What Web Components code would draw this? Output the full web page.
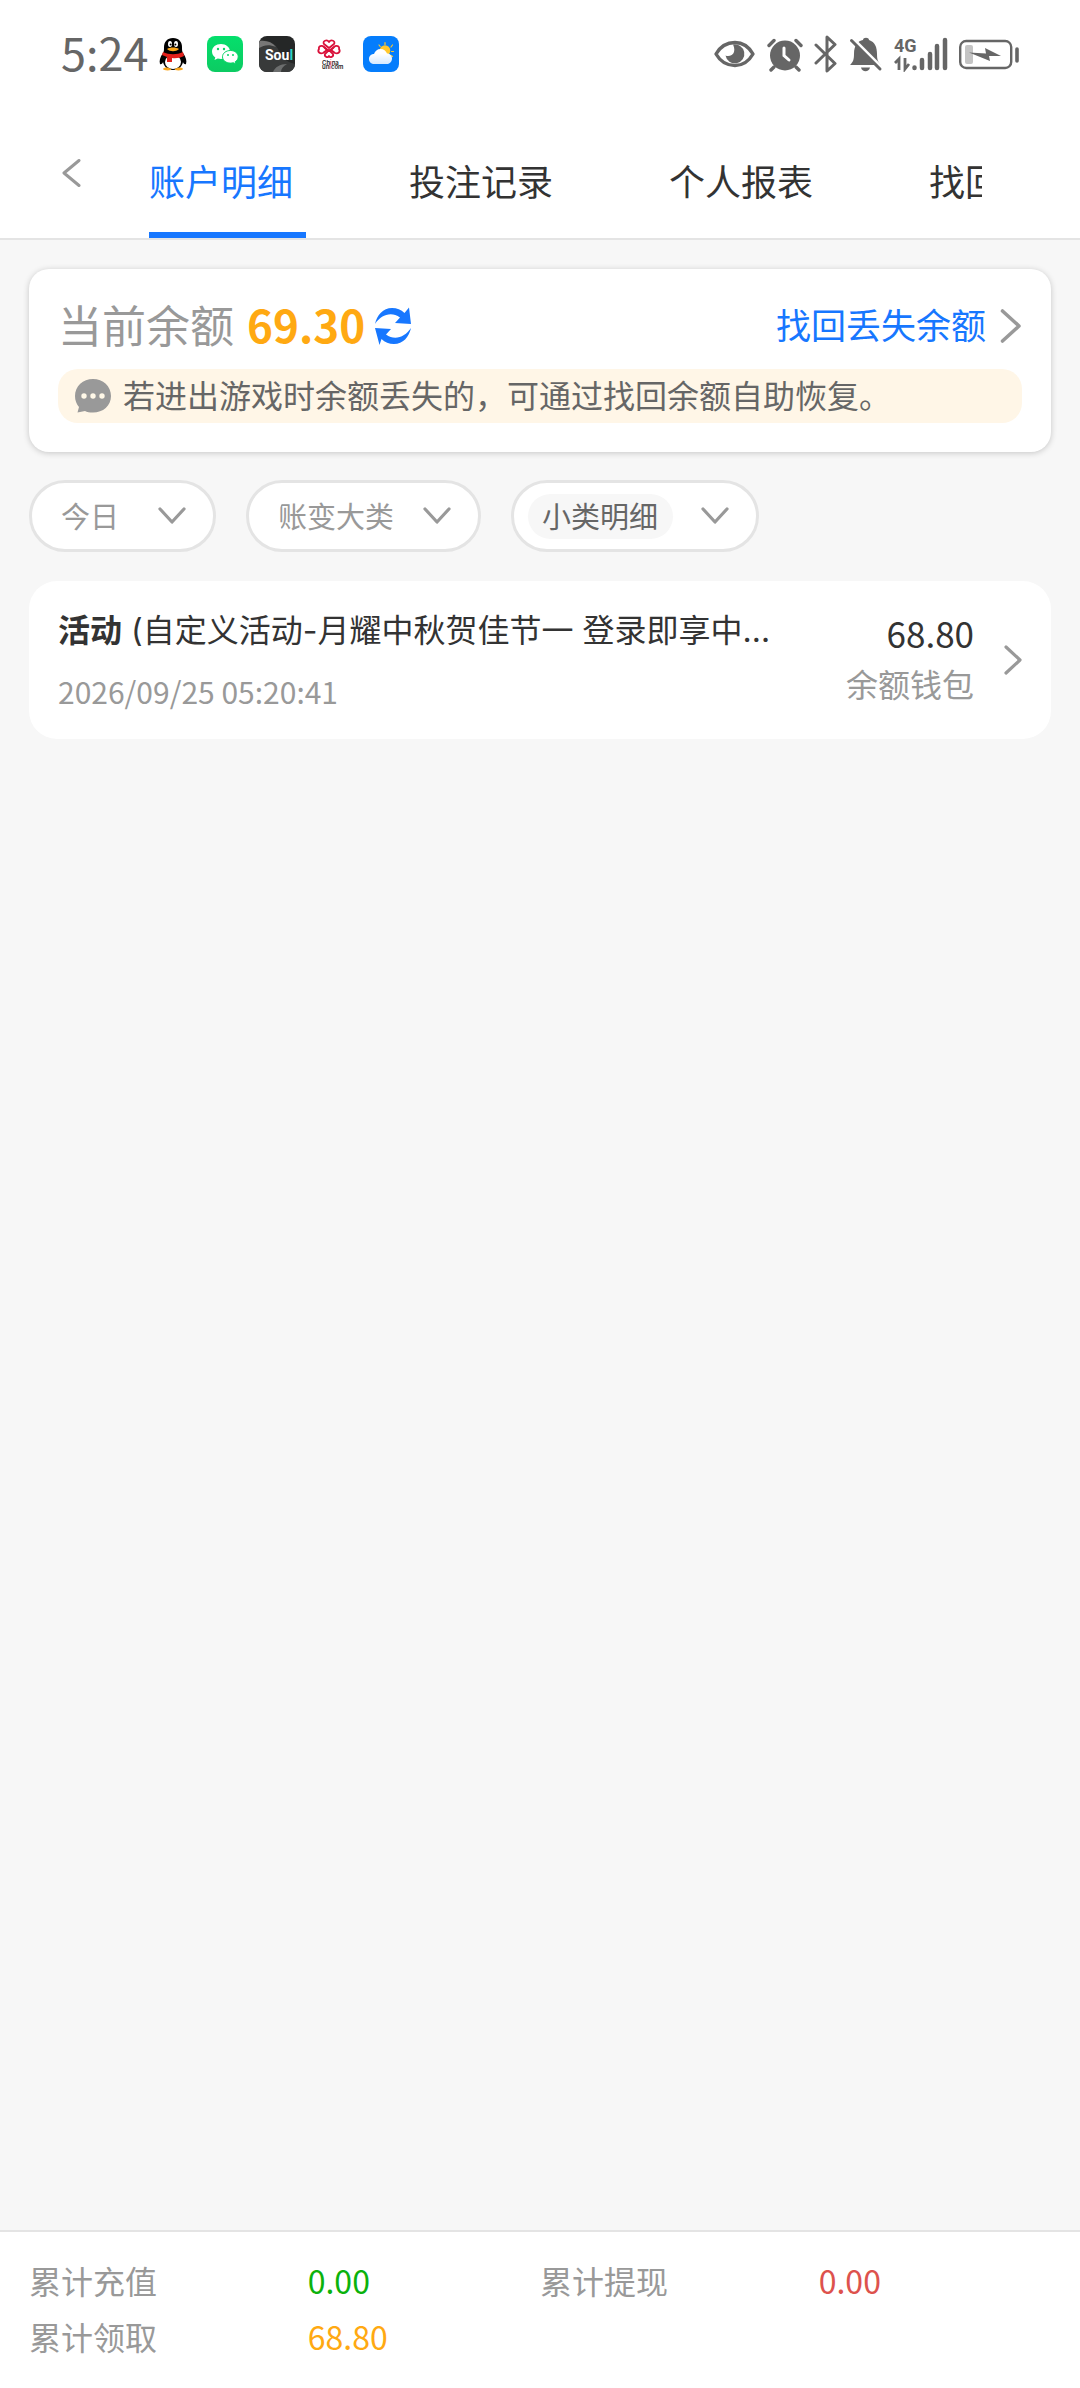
<!DOCTYPE html>
<html lang="zh-CN">
<head>
<meta charset="utf-8">
<meta name="viewport" content="width=device-width, initial-scale=1">
<title>账户明细</title>
<style>
    html, body {
        margin: 0;
        background: #f7f7f7;
    }
    body {
        font-family: "Noto Sans CJK SC", sans-serif;
        font-size: 32px;
        color: #333;
    }
</style>
</head>
<body>

<account-page></account-page>

<script>
    // name: [width, height, svg content]
    const ICONS = {
        qq: [28, 34, `
            <path d="M14 1C8 1 5 5 5 10c0 3 0 4-1 6-3 4-4 8-3 11 1 1 3-1 3-2 1 5 5 8 10 8s9-3 10-8c0 1 2 3 3 2 1-3 0-7-3-11-1-2-1-3-1-6 0-5-3-9-9-9z" fill="#000"/>
            <ellipse cx="14" cy="25" rx="8" ry="7" fill="#fff"/>
            <ellipse cx="11" cy="7" rx="2" ry="3" fill="#fff"/><ellipse cx="17" cy="7" rx="2" ry="3" fill="#fff"/>
            <circle cx="11.6" cy="7.5" r="1" fill="#000"/><circle cx="16.4" cy="7.5" r="1" fill="#000"/>
            <path d="M8 12c3-2 9-2 12 0-3 3-9 3-12 0z" fill="#f9a51b"/>
            <path d="M4 15c6 3 14 3 20 0l1 4c-4 2-8 2.500-12 2v4H8v-5l-5-2z" fill="#e3201b"/>
            <path d="M4 32c1-2 5-2 8 0v1c-4 1-8 0-8-1zM24 32c-1-2-5-2-8 0v1c4 1 8 0 8-1z" fill="#f9a51b"/>`],
        wechat: [36, 36, `
            <defs><linearGradient id="g" x2="0" y2="1"><stop stop-color="#05df6c"/><stop offset="1" stop-color="#0ccb62"/></linearGradient></defs>
            <rect width="36" height="36" rx="8" fill="url(#g)"/>
            <path d="M14 8C9 8 5 11 5 15.500c0 2.500 1.300 4.500 3.300 6L7.500 24l3.200-1.500c1 .3 2.200.5 3.300.5 5 0 9-3.200 9-7.500S19 8 14 8z" fill="#fff"/>
            <path d="M23.500 14.500c-4.500 0-8 2.700-8 6.300s3.500 6.300 8 6.300c1 0 2-.1 2.800-.4l2.500 1.300-.6-2.200c1.800-1.200 3-3 3-5 0-3.600-3.400-6.300-7.700-6.300z" fill="#fff" stroke="#09d567" stroke-width="1"/>
            <circle cx="11" cy="13" r="1.200" fill="#09d567"/><circle cx="17" cy="13" r="1.200" fill="#09d567"/>
            <circle cx="21" cy="19" r="1" fill="#09d567"/><circle cx="26" cy="19" r="1" fill="#09d567"/>`],
        soul: [36, 36, `
            <defs><clipPath id="c"><rect width="36" height="36" rx="8"/></clipPath></defs>
            <g clip-path="url(#c)"><rect width="36" height="36" fill="#252727"/>
            <path d="M0 5c8-2 16 2 19 8 3 8 8 13 17 15v8H0z" fill="#383a3a"/>
            <path d="M0 5c7-1 13 1 17 6-7-3-12-2-17 1z" fill="#777"/>
            <path d="M14 36c2-5 7-8 14-8-4 2-6 5-6 8z" fill="#6c6e6e"/></g>
            <text x="6" y="24" font-family="'Liberation Sans Narrow', Roboto, sans-serif" font-size="14" font-weight="700" fill="#fff">Sou<tspan fill="#2cd5c4">l</tspan></text>`],
        unicom: [36, 36, `
            <g fill="none" stroke="#d9113a" stroke-width="1.800" stroke-linejoin="round">
            <path d="M18 12l-5-4c-2-3 3-5 5-2 2-3 7-1 5 2z"/>
            <path d="M16 14l-4 3c-3 1-6-1-4-4-1-3 3-4 5-2zM20 14l4 3c3 1 6-1 4-4 1-3-3-4-5-2z"/>
            <path d="M18 14l-4 4c-1 3 3 4 4 2 1 2 5 1 4-2z"/>
            <path d="M13 11l5 4 5-4"/></g>
            <text x="11" y="29" font-family="Inter, sans-serif" font-size="6" font-weight="600" fill="#222">Ch<tspan fill="#d9113a">i</tspan>na</text>
            <text x="11" y="33" font-family="Inter, sans-serif" font-size="6" font-weight="600" fill="#222">un<tspan fill="#d9113a">i</tspan>com</text>`],
        weather: [36, 36, `
            <defs><linearGradient id="w" x2="0" y2="1"><stop offset=".3" stop-color="#fff"/><stop offset="1" stop-color="#d5e9ff"/></linearGradient></defs>
            <rect width="36" height="36" rx="8" fill="#057dfc"/>
            <g stroke="#ffc72c" stroke-width="1.200" stroke-linecap="round"><path d="M22 6.500v2M16 9l1.200 1.500M29.500 9l-1.500 2M30.500 15.500h-2M28 19.500l1.500 1"/></g>
            <circle cx="22" cy="14.500" r="5.300" fill="#ffc72c"/>
            <path d="M11 28c-3 0-5-2.300-5-5s2-5 5-5c1-3 3.300-5 6.500-5s5.500 2 6.500 4.500c3 0 5 2.200 5 5S27 28 24 28z" fill="url(#w)"/>`],
        eye: [42, 36, `
            <path d="M2 18C6 11 13 6.500 21 6.500S35 11 39 18C35 25 29 29.500 21 29.500S6 25 2 18z" fill="none" stroke="#666" stroke-width="3.400" stroke-linejoin="round"/>
            <path d="M19 8.500a9.500 9.500 0 1 1-7.500 11c3 1.500 7.500 0 8.500-3.500 1-3.300-.5-6-1-7.500z" fill="#666"/>`],
        alarm: [36, 36, `
            <circle cx="18" cy="19.500" r="15" fill="#666"/>
            <path d="M2 9.500l5-5M29 4.500l5 5M7 31l-3 3M29 31l3 3" stroke="#666" stroke-width="3.400" stroke-linecap="round"/>
            <path d="M17 12v7.500l5 4.500" fill="none" stroke="#fff" stroke-width="3" stroke-linecap="round"/>`],
        bluetooth: [24, 38, `
            <path d="M2 10l19 18.500-8 7.500V2l8 7.500L2 28" fill="none" stroke="#666" stroke-width="3" stroke-linejoin="round" stroke-linecap="round"/>`],
        bell: [34, 36, `
            <path d="M1 29c3-3 4-5 4-11 0-9 4-13 9-14 0-3 6-3 6 0 6 2 8 7 8 14 0 6 1 8 4 11z" fill="#666"/>
            <path d="M12 31.500h9c-1 5-8 5-9 0z" fill="#666"/>
            <path d="M4 2.500l30 30" stroke="#fff" stroke-width="3"/>
            <path d="M2.500 4.500l28.500 28.500" stroke="#666" stroke-width="3" stroke-linecap="round"/>`],
        signal: [54, 36, `
            <text x="0" y="16" font-family="'Liberation Sans Narrow', Roboto, sans-serif" font-size="18" font-weight="700" fill="#666">4G</text>
            <path d="M1 27l4-4v11M15 28l-4 5V22" fill="none" stroke="#666" stroke-width="2.800"/>
            <path d="M20.500 31.500v.5M28 24v8M36 18v14M43 10v22M51 4v28" stroke="#666" stroke-width="4.500" stroke-linecap="round"/>`],
        battery: [60, 36, `
            <rect x="1.200" y="5" width="51" height="27" rx="6" fill="none" stroke="#666" stroke-width="2.400"/>
            <rect x="6" y="9" width="8" height="19" rx="2" fill="#c4c4c4"/>
            <path d="M10 16.500l17 1-1-5.500 16 8h-12l1 5z" fill="#666"/>
            <path d="M58 13v12" stroke="#666" stroke-width="3.600" stroke-linecap="round"/>`],
        back: [20, 28, `<path d="M18 1.500L3 14l15 12.500" fill="none" stroke="#999" stroke-width="3" stroke-linecap="round" stroke-linejoin="round"/>`],
        more: [22, 34, `<path d="M2.500 2L19 17 2.500 32" fill="none" stroke="#999" stroke-width="3.600" stroke-linecap="round" stroke-linejoin="round"/>`],
        next: [18, 30, `<path d="M2 2l14 13L2 28" fill="none" stroke="#999" stroke-width="3.200" stroke-linecap="round" stroke-linejoin="round"/>`],
        down: [28, 18, `<path d="M2 2l12 13L26 2" fill="none" stroke="#999" stroke-width="3.200" stroke-linecap="round" stroke-linejoin="round"/>`],
        refresh: [38, 38, `
            <path d="M1 17C3 8 9 1 18 1c5 0 9 1.500 12.500 5L35 .5 37 17l-16-1 5-5.500C17 4 7 8 1 17z" fill="#1777ff"/>
            <path d="M37 21c-2 9-8 16-17 16-5 0-9-1.500-12.500-5L5.500 38 1 21l16 1-5 5.500C21 34 31 30 37 21z" fill="#1777ff"/>`],
        bubble: [36, 34, `
            <path d="M18 0c10 0 18 7 18 17s-8 16.500-18 16.500c-3.500 0-6-.5-8-1.500l-7.500 1.500L4 28C1.500 25 0 21.500 0 17 0 7 8 0 18 0z" fill="#999"/>
            <g fill="#fff8e8"><circle cx="9" cy="17" r="2.700"/><circle cx="18" cy="17" r="2.700"/><circle cx="27" cy="17" r="2.700"/></g>`]
    };

    class UiIcon extends HTMLElement {
        constructor () {
            super ()
            this.attachShadow({mode: 'open'})
        }

        connectedCallback() {
            const [w, h, body] = ICONS[this.getAttribute('name')];
            this.shadowRoot.innerHTML = `
                <style>
                    :host { display: block; flex: none; }
                    svg { display: block; }
                </style>
                <svg width="${w}" height="${h}" viewBox="0 0 ${w} ${h}" aria-hidden="true">${body}</svg>`;
        }
    }

    class StatusBar extends HTMLElement {
        constructor () {
            super ()
            this.attachShadow({mode: 'open'})
            this.shadowRoot.innerHTML = `
                <style>
                    :host {
                        display: flex;
                        justify-content: space-between;
                        align-items: center;
                        height: 108px;
                        padding: 0 61px;
                        background: #fff;
                        color: #666;
                    }
                    .left, .right { display: flex; align-items: center; }
                    time { font-size: 45px; line-height: 60px; padding-bottom: 4px; margin-right: 11px; }
                    .apps { display: flex; align-items: center; gap: 16px; }
                    .apps ui-icon:first-child { margin-right: 4px; }
                    .right { gap: 11px; }
                </style>
                <div class="left">
                    <time>5:24</time>
                    <div class="apps">
                        <ui-icon name="qq"></ui-icon>
                        <ui-icon name="wechat"></ui-icon>
                        <ui-icon name="soul"></ui-icon>
                        <ui-icon name="unicom"></ui-icon>
                        <ui-icon name="weather"></ui-icon>
                    </div>
                </div>
                <div class="right">
                    <ui-icon name="eye"></ui-icon>
                    <ui-icon name="alarm"></ui-icon>
                    <ui-icon name="bluetooth"></ui-icon>
                    <ui-icon name="bell"></ui-icon>
                    <ui-icon name="signal"></ui-icon>
                    <ui-icon name="battery"></ui-icon>
                </div>`;
        }
    }

    class NavTabs extends HTMLElement {
        constructor () {
            super ()
            this.attachShadow({mode: 'open'})
        }

        connectedCallback() {
            this.tabs = this.getAttribute('tabs').split(',');
            this.shadowRoot.innerHTML = `
                <style>
                    :host {
                        display: flex;
                        align-items: center;
                        height: 130px;
                        padding: 0 98px 0 61px;
                        border-bottom: 2px solid #e4e4e4;
                        background: #fff;
                    }
                    button {
                        margin: 0;
                        padding: 0;
                        border: 0;
                        background: none;
                        font: inherit;
                        color: inherit;
                    }
                    .back { width: 88px; }
                    .tabs {
                        display: flex;
                        flex: 1;
                        align-self: flex-end;
                        gap: 103px;
                        overflow: hidden;
                    }
                    .tabs button {
                        flex: none;
                        width: 157px;
                        padding-bottom: 4px;
                        font-size: 36px;
                        line-height: 96px;
                        text-align: left;
                        border-bottom: 6px solid transparent;
                    }
                    .tabs [aria-selected="true"] { color: #1777ff; border-color: #1777ff; }
                </style>
                <button class="back" aria-label="返回"><ui-icon name="back"></ui-icon></button>
                <div class="tabs" role="tablist">${this.mapTabs()}</div>`;
            this.setListeners();
        }

        mapTabs() {
            return this.tabs.map((t, i) => `<button role="tab" aria-selected="${i === 0}">${t}</button>`).join('');
        }

        setListeners() {
            const all = Array.from(this.shadowRoot.querySelectorAll('[role="tab"]'));
            all.forEach(el => {
                el.addEventListener('click', () => all.forEach(t => t.setAttribute('aria-selected', t === el)))
            })
        }
    }

    class BalanceCard extends HTMLElement {
        constructor () {
            super ()
            this.attachShadow({mode: 'open'})
            this.shadowRoot.innerHTML = `
                <style>
                    :host {
                        display: block;
                        padding: 27px 29px 29px;
                        border-radius: 20px;
                        background: #fff;
                        box-shadow: 0 1px 6px rgba(0, 0, 0, .2);
                    }
                    .row { display: flex; align-items: center; line-height: 56px; margin-bottom: 13px; }
                    .row span { padding-bottom: 4px; }
                    .label { font-size: 44px; color: #999; }
                    .amount { font-size: 44px; font-weight: 700; color: #ffa912; margin: 0 9px 0 13px; }
                    button { padding: 0; border: 0; background: none; }
                    a {
                        display: flex;
                        align-items: center;
                        gap: 14px;
                        margin-left: auto;
                        font-size: 35px;
                        color: #1777ff;
                        text-decoration: none;
                    }
                    .notice {
                        display: flex;
                        align-items: center;
                        gap: 12px;
                        margin: 0;
                        padding: 0 17px;
                        border-radius: 20px;
                        background: #fff6e7;
                        color: #666;
                        line-height: 50px;
                    }
                    .notice span { padding-bottom: 4px; }
                </style>
                <div class="row">
                    <span class="label">当前余额</span>
                    <span class="amount"><slot name="amount"></slot></span>
                    <button aria-label="刷新"><ui-icon name="refresh"></ui-icon></button>
                    <a href="#recover"><span>找回丢失余额</span><ui-icon name="more"></ui-icon></a>
                </div>
                <p class="notice"><ui-icon name="bubble"></ui-icon><span><slot></slot></span></p>`;
        }
    }

    class FilterSelect extends HTMLElement {
        constructor () {
            super ()
            this.attachShadow({mode: 'open'})
        }

        connectedCallback() {
            const label = this.getAttribute('label');
            this.shadowRoot.innerHTML = `
                <style>
                    :host {
                        display: flex;
                        align-items: center;
                        justify-content: space-between;
                        gap: 28px;
                        box-sizing: border-box;
                        min-width: 187px;
                        height: 72px;
                        padding: 0 27px 0 29px;
                        border: 3px solid #e4e4e4;
                        border-radius: 36px;
                        background: #fff;
                    }
                    :host([chip]) { padding-left: 14px; }
                    select {
                        appearance: none;
                        box-sizing: border-box;
                        margin: 0;
                        padding: 0 0 3px;
                        border: 0;
                        border-radius: 23px;
                        background: none;
                        font: inherit;
                        font-size: 29px;
                        line-height: 42px;
                        height: 45px;
                        color: #999;
                    }
                    :host([chip]) select { padding: 0 14px 3px; background: #f7f7f7; color: #666; }
                </style>
                <select aria-label="${label}"><option>${label}</option></select>
                <ui-icon name="down"></ui-icon>`;
        }
    }

    class RecordItem extends HTMLElement {
        constructor () {
            super ()
            this.attachShadow({mode: 'open'})
            this.shadowRoot.innerHTML = `
                <style>
                    :host {
                        display: flex;
                        align-items: center;
                        padding: 25px 29px;
                        border-radius: 28px;
                        background: #fff;
                    }
                    .info { flex: 1; min-width: 0; }
                    /* Inter supplies the low ellipsis, the rest falls back to the CJK face */
                    .title {
                        font-family: Inter, "Noto Sans CJK SC", sans-serif;
                        line-height: 50px;
                        margin-bottom: 12px;
                        overflow: hidden;
                        white-space: nowrap;
                        text-overflow: ellipsis;
                    }
                    .time { font-size: 30px; line-height: 46px; color: #999; }
                    .money { margin: 0 30px 0 70px; padding-bottom: 8px; text-align: right; }
                    .sum { font-size: 35px; line-height: 54px; }
                    .wallet { line-height: 46px; color: #999; }
                </style>
                <div class="info">
                    <div class="title"><slot></slot></div>
                    <div class="time"><slot name="time"></slot></div>
                </div>
                <div class="money">
                    <div class="sum"><slot name="sum"></slot></div>
                    <div class="wallet"><slot name="wallet"></slot></div>
                </div>
                <ui-icon name="next"></ui-icon>`;
        }
    }

    class TotalsBar extends HTMLElement {
        constructor () {
            super ()
            this.attachShadow({mode: 'open'})
            this.shadowRoot.innerHTML = `
                <style>
                    :host {
                        display: block;
                        padding: 20px 29px 24px;
                        border-top: 2px solid #e4e4e4;
                        background: #fff;
                    }
                    dl {
                        display: grid;
                        grid-template-columns: 1fr 1fr;
                        margin: 0;
                        line-height: 56px;
                    }
                    div { display: grid; grid-template-columns: 6fr 5fr; }
                    dt { color: #999; }
                    dd { margin: 0; }
                    .in { color: #0bb20c; }
                    .out { color: #dd524d; }
                    .got { color: #ffa912; }
                </style>
                <dl>
                    <div><dt>累计充值</dt><dd class="in">0.00</dd></div>
                    <div><dt>累计提现</dt><dd class="out">0.00</dd></div>
                    <div><dt>累计领取</dt><dd class="got">68.80</dd></div>
                </dl>`;
        }
    }

    class AccountPage extends HTMLElement {
        constructor () {
            super ()
            this.attachShadow({mode: 'open'})
            this.shadowRoot.innerHTML = `
                <style>
                    :host { display: flex; flex-direction: column; min-height: 100vh; }
                    main { flex: 1; padding: 29px; }
                    .filters { display: flex; gap: 30px; margin: 28px 0 29px; }
                </style>
                <status-bar></status-bar>
                <nav-tabs tabs="账户明细,投注记录,个人报表,找回"></nav-tabs>
                <main>
                    <balance-card><span slot="amount">69.30</span>若进出游戏时余额丢失的，可通过找回余额自助恢复。</balance-card>
                    <div class="filters">
                        <filter-select label="今日"></filter-select>
                        <filter-select label="账变大类"></filter-select>
                        <filter-select label="小类明细" chip></filter-select>
                    </div>
                    <record-item>
                        <b>活动</b> (自定义活动-月耀中秋贺佳节一 登录即享中秋好礼)
                        <span slot="time">2026/09/25 05:20:41</span>
                        <span slot="sum">68.80</span>
                        <span slot="wallet">余额钱包</span>
                    </record-item>
                </main>
                <totals-bar></totals-bar>`;
        }
    }

    window.customElements.define('ui-icon', UiIcon)
    window.customElements.define('status-bar', StatusBar)
    window.customElements.define('nav-tabs', NavTabs)
    window.customElements.define('balance-card', BalanceCard)
    window.customElements.define('filter-select', FilterSelect)
    window.customElements.define('record-item', RecordItem)
    window.customElements.define('totals-bar', TotalsBar)
    window.customElements.define('account-page', AccountPage)
</script>
</body>
</html>
